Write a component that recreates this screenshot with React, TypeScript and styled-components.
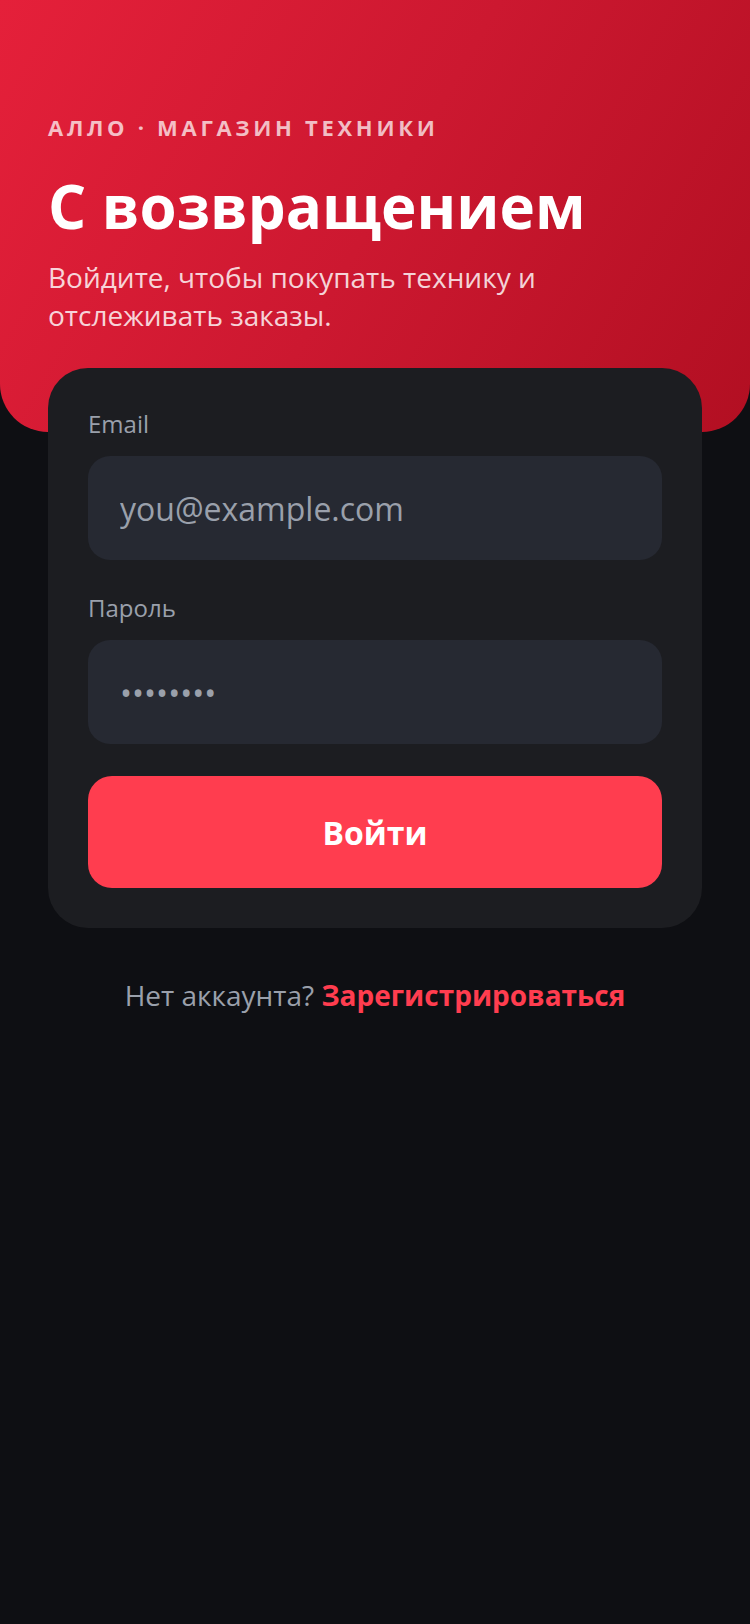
import React from "react";
import styled, { createGlobalStyle } from "styled-components";

const GlobalStyle = createGlobalStyle`
  html, body {
    margin: 0;
    padding: 0;
    background: #0e0f13;
  }
  body {
    font-family: "Open Sans", "Noto Sans", sans-serif;
    -webkit-font-smoothing: antialiased;
  }
  * { box-sizing: border-box; }
`;

const Page = styled.div`
  min-height: 1624px;
  background: #0e0f13;
  display: flex;
  flex-direction: column;
`;

const Hero = styled.header`
  background: linear-gradient(120deg, #e5203a 0%, #cc1830 50%, #b20f22 100%);
  border-radius: 0 0 48px 48px;
  padding: 112px 48px 98px;
  display: flex;
  flex-direction: column;
`;

const Eyebrow = styled.div`
  font-size: 22px;
  line-height: 30px;
  font-weight: 700;
  letter-spacing: 3.7px;
  color: rgba(255, 255, 255, 0.72);
`;

const Title = styled.h1`
  margin: 28px 0 0;
  font-size: 60px;
  line-height: 72px;
  font-weight: 700;
  color: #ffffff;
  letter-spacing: 0;
`;

const Subtitle = styled.p`
  margin: 16px 0 0;
  font-size: 28px;
  line-height: 38px;
  font-weight: 400;
  color: rgba(255, 255, 255, 0.82);
  max-width: 560px;
`;

const Card = styled.form`
  position: relative;
  margin: -64px 48px 0;
  background: #1c1d21;
  border-radius: 40px;
  padding: 40px;
  display: flex;
  flex-direction: column;
`;

const Field = styled.label<{ $gap?: number }>`
  display: flex;
  flex-direction: column;
  gap: 16px;
  margin-top: ${(p) => p.$gap ?? 0}px;
`;

const Label = styled.span`
  font-size: 24px;
  line-height: 32px;
  color: #9aa0ab;
`;

const Input = styled.input`
  height: 104px;
  width: 100%;
  border: none;
  outline: none;
  border-radius: 22px;
  background: #262932;
  padding: 0 32px;
  font-family: "Open Sans", "Noto Sans", sans-serif;
  font-size: 32px;
  color: #e6e8ec;
  &::placeholder {
    color: #9aa0ab;
  }
`;

const Submit = styled.button`
  margin-top: 32px;
  height: 112px;
  border: none;
  border-radius: 24px;
  background: #ff3d4f;
  color: #ffffff;
  font-family: "Open Sans", "Noto Sans", sans-serif;
  font-size: 32px;
  font-weight: 700;
  cursor: pointer;
`;

const Footer = styled.p`
  margin: 49px 0 0;
  text-align: center;
  font-size: 28px;
  line-height: 36px;
  color: #9aa0ab;
`;

const Link = styled.a`
  color: #ff3d4f;
  font-weight: 700;
  text-decoration: none;
`;

export default function App() {
  return (
    <>
      <GlobalStyle />
      <Page>
        <Hero>
          <Eyebrow>АЛЛО · МАГАЗИН ТЕХНИКИ</Eyebrow>
          <Title>С возвращением</Title>
          <Subtitle>Войдите, чтобы покупать технику и отслеживать заказы.</Subtitle>
        </Hero>
        <Card onSubmit={(e) => e.preventDefault()}>
          <Field>
            <Label>Email</Label>
            <Input type="email" placeholder="you@example.com" />
          </Field>
          <Field $gap={32}>
            <Label>Пароль</Label>
            <Input type="password" placeholder="••••••••" />
          </Field>
          <Submit type="submit">Войти</Submit>
        </Card>
        <Footer>
          Нет аккаунта? <Link href="#">Зарегистрироваться</Link>
        </Footer>
      </Page>
    </>
  );
}
